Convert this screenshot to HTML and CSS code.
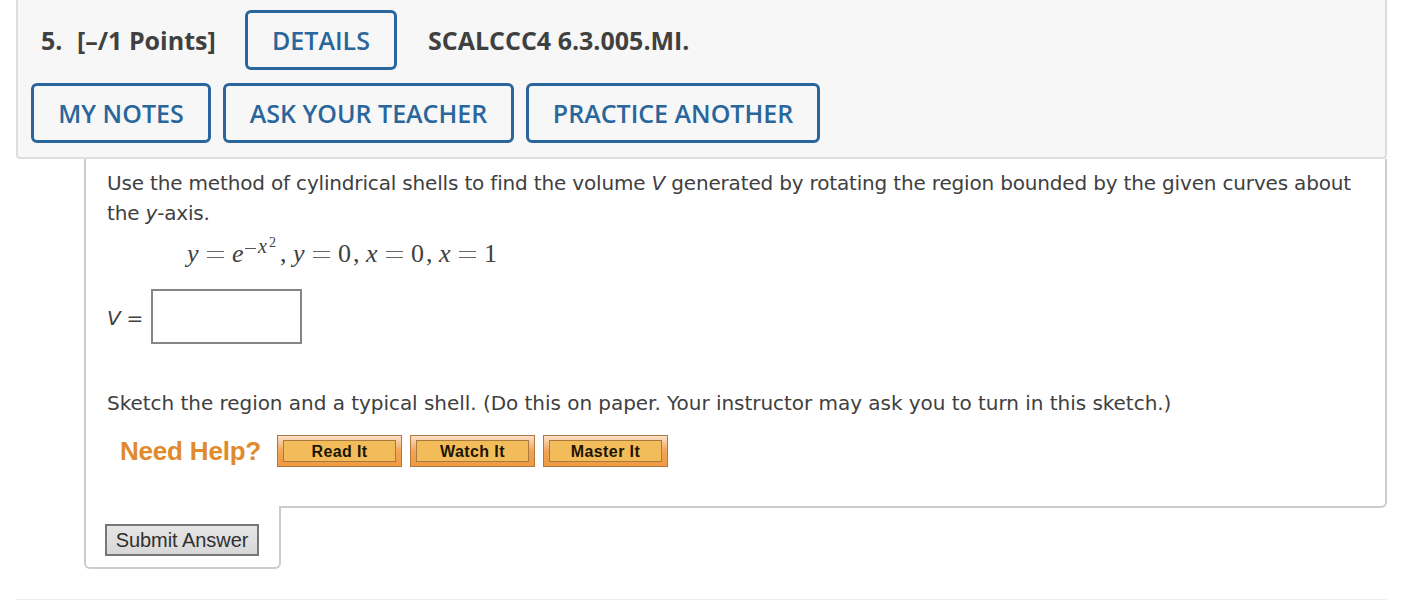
FILE: index.html
```
<!DOCTYPE html>
<html lang="en">
  <head>
    <meta charset="utf-8">
    <title>5. SCALCCC4 6.3.005.MI.</title>
    <link rel="stylesheet" href="styles.css">
  </head>
  <body>
    <div class="question">
      <div class="header">
        <div class="header-row">
          <span class="number">5.</span>
          <span class="points">[–/1 Points]</span>
          <button class="btn details">DETAILS</button>
          <span class="source">SCALCCC4 6.3.005.MI.</span>
        </div>
        <div class="header-row">
          <button class="btn notes">MY NOTES</button>
          <button class="btn ask">ASK YOUR TEACHER</button>
          <button class="btn practice">PRACTICE ANOTHER</button>
        </div>
      </div>
      <div class="content">
        <p class="prompt">Use the method of cylindrical shells to find the volume <i>V</i> generated by rotating the region bounded by the given curves about<br>the <i>y</i>-axis.</p>
        <div class="formula">
          <i class="var">y</i><span class="eq"></span><i class="base">e</i><span class="exp"><span class="minus"></span><i>x</i><sup>2</sup></span><span class="comma">,</span>
          <i class="var">y</i><span class="eq"></span><span class="num">0</span><span class="comma">,</span>
          <i class="var">x</i><span class="eq"></span><span class="num">0</span><span class="comma">,</span>
          <i class="var">x</i><span class="eq"></span><span class="num">1</span>
        </div>
        <label class="answer"><span><i>V</i> =</span><input type="text"></label>
        <p class="sketch">Sketch the region and a typical shell. (Do this on paper. Your instructor may ask you to turn in this sketch.)</p>
        <div class="help">
          <span class="help-title">Need Help?</span>
          <button class="help-btn"><span>Read It</span></button>
          <button class="help-btn"><span>Watch It</span></button>
          <button class="help-btn"><span>Master It</span></button>
        </div>
      </div>
      <div class="submit">
        <button class="submit-btn">Submit Answer</button>
      </div>
    </div>
    <div class="next"></div>
  </body>
</html>
```
FILE: styles.css
```
* {
  box-sizing: border-box;
}
body {
  margin: 0;
  height: 600px;
  overflow: hidden;
  background: #fff;
  color: #404040;
  font-family: Verdana, "DejaVu Sans", sans-serif;
  font-size: 20px;
}
p {
  margin: 0;
}
button {
  margin: 0;
  padding: 0;
  cursor: pointer;
}
.question {
  width: 1371px;
  margin-left: 16px;
}
.header {
  height: 159px;
  padding: 10px 13px 0;
  border: 2px solid #ddd;
  border-top: none;
  border-radius: 0 0 4px 4px;
  background: #f7f7f7;
  font-family: "Open Sans", sans-serif;
}
.header-row {
  display: flex;
  align-items: center;
  height: 60px;
  margin-bottom: 13px;
  font-size: 25px;
  font-weight: 700;
  white-space: nowrap;
}
.number {
  width: 36px;
  margin-left: 10px;
}
.points {
  width: 168px;
}
.btn {
  height: 60px;
  margin-right: 12px;
  padding-bottom: 1px;
  border: 3px solid #29669b;
  border-radius: 6px;
  background: transparent;
  color: #29669b;
  font: 600 25px "Open Sans", sans-serif;
}
.details {
  width: 152px;
  margin-right: 31px;
}
.notes {
  width: 180px;
}
.ask {
  width: 291px;
}
.practice {
  width: 294px;
}
.content {
  height: 349px;
  margin-left: 68px;
  padding: 9px 0 0 21px;
  border: 2px solid #ccc;
  border-top: none;
  border-radius: 0 0 6px 0;
  white-space: nowrap;
}
.prompt {
  line-height: 30px;
  letter-spacing: -0.17px;
}
.formula {
  display: flex;
  align-items: baseline;
  height: 32px;
  margin: 9px 0 0 80px;
  font: 26px/34px "Liberation Serif", serif;
}
.var {
  width: 20px;
}
.eq {
  width: 17px;
  height: 7px;
  margin-right: 8px;
  border: solid #666;
  border-width: 1px 0;
  transform: translateY(-4px);
}
.base {
  width: 13px;
}
.exp {
  display: flex;
  align-items: baseline;
  width: 35px;
  font-size: 20px;
  line-height: 20px;
  transform: translateY(-9px);
}
.minus {
  width: 11px;
  height: 1px;
  margin-right: 2px;
  background: #555;
  transform: translateY(-4px);
}
.exp sup {
  margin-left: 2px;
  font-size: 14px;
  line-height: 1;
  vertical-align: baseline;
  transform: translateY(-6px);
}
.comma {
  width: 13px;
}
.num {
  width: 15px;
}
.answer {
  display: flex;
  align-items: center;
  height: 55px;
  margin-top: 20px;
}
.answer span {
  width: 44px;
  padding-top: 3px;
  letter-spacing: -0.3px;
}
.answer input {
  width: 151px;
  height: 55px;
  border: 2px solid #858585;
  background: #fff;
}
.sketch {
  margin-top: 44px;
  line-height: 30px;
  letter-spacing: -0.04px;
}
.help {
  display: flex;
  align-items: center;
  gap: 8px;
  margin: 17px 0 0 13px;
  font-family: "Liberation Sans", Arial, sans-serif;
}
.help-title {
  width: 149px;
  color: #e08a2e;
  font-size: 26px;
  font-weight: 700;
  line-height: 30px;
  letter-spacing: -0.2px;
}
.help-btn {
  width: 125px;
  height: 32px;
  padding: 4px 5px;
  border: 1px solid #b07840;
  background: linear-gradient(#fce0cc, #f0a557 50%, #ef9a43);
}
.help-btn span {
  display: block;
  height: 22px;
  border: 1px solid #a87a3c;
  background: #f2bc5b;
  color: #1c1503;
  font: 700 16px/22px "Liberation Sans", Arial, sans-serif;
  letter-spacing: 0.4px;
}
/* covers the border above so the tab joins the panel */
.submit {
  position: relative;
  width: 197px;
  height: 63px;
  margin: -2px 0 0 68px;
  padding: 18px 0 0 19px;
  border: 2px solid #ccc;
  border-top: none;
  border-radius: 0 0 6px 6px;
  background: #fff;
}
.submit-btn {
  display: block;
  width: 154px;
  height: 32px;
  border: 2px solid #777;
  background: linear-gradient(#e6e6e6, #d8d8d8);
  color: #303030;
  font: 20px "Liberation Sans", Arial, sans-serif;
  letter-spacing: -0.05px;
}
.next {
  height: 2px;
  margin: 30px 23px 0 16px;
  background: #eee;
}
```
